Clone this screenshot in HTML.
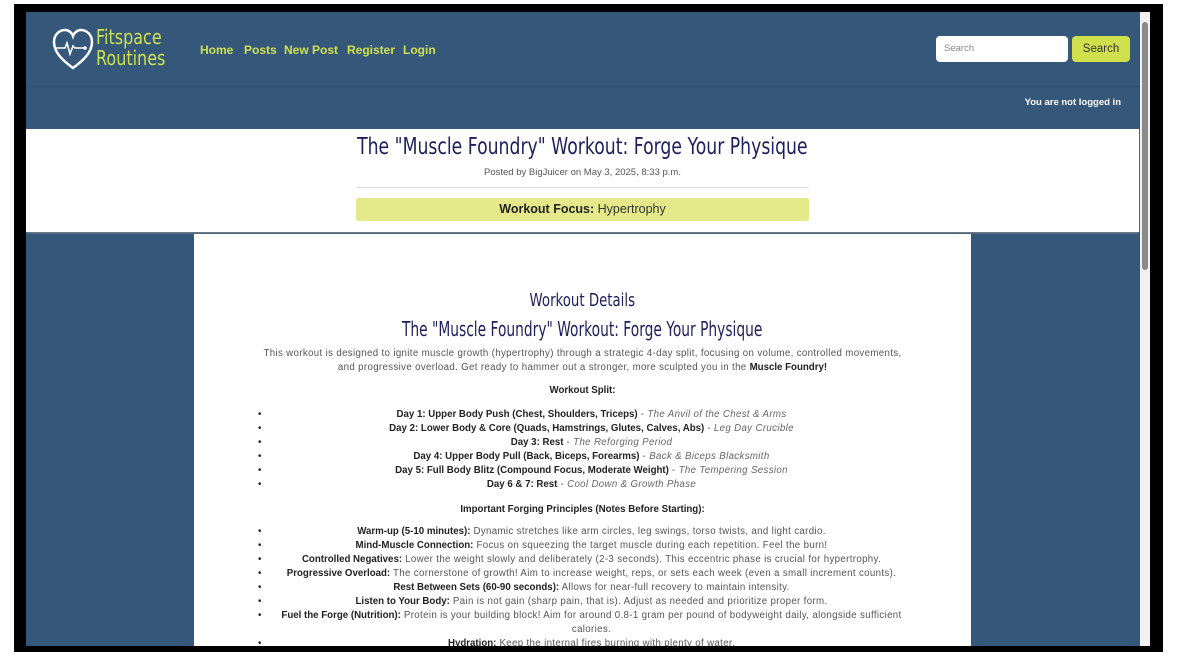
<!DOCTYPE html>
<html><head><style>
*{margin:0;padding:0;box-sizing:border-box}
html,body{width:1178px;height:667px;overflow:hidden;background:#fff;font-family:"Liberation Sans",sans-serif}
#frame{position:absolute;left:14px;top:4px;width:1149px;height:648px;background:#000}
#vp{position:absolute;left:26px;top:12px;width:1114px;height:634px;background:#35587a;overflow:hidden}
#sb{position:absolute;left:1140px;top:12px;width:10px;height:634px;background:#f0f0f0}
#sb div{position:absolute;left:2px;top:10px;width:6px;height:248px;background:#8a8a8a;border-radius:3px}
.hand{font-family:"DejaVu Sans",cursive;color:#1f1f5c;font-weight:normal;white-space:nowrap;display:inline-block}
nav a{position:absolute;top:31px;color:#cfe04d;font-size:12px;font-weight:bold;text-decoration:none}
#hdr{position:absolute;left:0;top:0;width:1114px;height:75px;border-bottom:1px solid #2f4f6e}
#card{position:absolute;left:0;top:117px;width:1113px;height:103px;background:#fff;box-shadow:0 1px 2px #888}
#main{position:absolute;left:168px;top:222px;width:777px;height:420px;background:#fff;text-align:center;color:#555;font-size:9.7px;letter-spacing:0.35px}
b{color:#222;letter-spacing:0}
ul{list-style:none}
li{line-height:14px}
li:before{content:"•";position:absolute;left:64px;color:#222}
i{color:#666}
</style></head><body>
<div id="frame"></div>
<div id="vp">
 <div id="hdr">
  <svg style="position:absolute;left:26px;top:16px" width="42" height="42" viewBox="0 0 42 42"><path d="M21 40 C10 32 2 24 2 14 C2 6 8 2 13 2 C17 2 20 5 21 8 C22 5 25 2 29 2 C34 2 40 6 40 14 C40 24 32 32 21 40Z" fill="none" stroke="#fff" stroke-width="2.5"/><path d="M3 20 H13 L15 15 L18 26 L21 18 L23 20 H33" fill="none" stroke="#fff" stroke-width="1.6"/><circle cx="33" cy="20" r="1.8" fill="#fff"/></svg>
  <div class="hand" style="position:absolute;left:70px;top:15px;color:#cfe04d;font-size:20px;line-height:21px;transform:scaleX(0.8);transform-origin:0 0">Fitspace<br>Routines</div>
  <nav><a style="left:174px">Home</a><a style="left:218px">Posts</a><a style="left:258px">New Post</a><a style="left:321px">Register</a><a style="left:377px">Login</a></nav>
  <div style="position:absolute;left:910px;top:24px;width:132px;height:26px;background:#fff;border-radius:4px;font-size:9.5px;color:#888;padding:7px 8px">Search</div>
  <div style="position:absolute;left:1046px;top:24px;width:58px;height:26px;background:#cfe04d;border-radius:4px;font-size:11.5px;color:#333;text-align:center;line-height:26px">Search</div>
 </div>
 <div style="position:absolute;right:19px;top:85px;color:#fff;font-size:9.5px;font-weight:bold">You are not logged in</div>
 <div id="card">
  <div style="position:absolute;left:0;width:1113px;top:5px;text-align:center"><span class="hand" style="font-size:23px;transform:scaleX(0.75)">The "Muscle Foundry" Workout: Forge Your Physique</span></div>
  <div style="position:absolute;left:330px;width:453px;top:38px;text-align:center;font-size:9.5px;color:#555">Posted by BigJuicer on May 3, 2025, 8:33 p.m.</div>
  <div style="position:absolute;left:330px;width:453px;top:58px;border-top:1px solid #ddd"></div>
  <div style="position:absolute;left:330px;width:453px;top:69px;height:23px;background:#e6e98a;border-radius:2px;text-align:center;font-size:12.5px;line-height:23px;color:#333"><b>Workout Focus:</b> Hypertrophy</div>
 </div>
 <div id="main">
  <div style="margin-top:55px;line-height:24px;letter-spacing:0"><span class="hand" style="font-size:18px;transform:scaleX(0.74)">Workout Details</span></div>
  <div style="line-height:26px;letter-spacing:0"><span class="hand" style="font-size:20px;transform:scaleX(0.69)">The "Muscle Foundry" Workout: Forge Your Physique</span></div>
  <p style="line-height:14px;padding:0 64px;margin-top:0">This workout is designed to ignite muscle growth (hypertrophy) through a strategic 4-day split, focusing on volume, controlled movements,<br>and progressive overload. Get ready to hammer out a stronger, more sculpted you in the <b>Muscle Foundry!</b></p>
  <p style="margin:10px 0 12px"><b>Workout Split:</b></p>
  <ul style="padding:0 60px 0 78px">
   <li><b>Day 1: Upper Body Push (Chest, Shoulders, Triceps)</b> - <i>The Anvil of the Chest &amp; Arms</i></li>
   <li><b>Day 2: Lower Body &amp; Core (Quads, Hamstrings, Glutes, Calves, Abs)</b> - <i>Leg Day Crucible</i></li>
   <li><b>Day 3: Rest</b> - <i>The Reforging Period</i></li>
   <li><b>Day 4: Upper Body Pull (Back, Biceps, Forearms)</b> - <i>Back &amp; Biceps Blacksmith</i></li>
   <li><b>Day 5: Full Body Blitz (Compound Focus, Moderate Weight)</b> - <i>The Tempering Session</i></li>
   <li><b>Day 6 &amp; 7: Rest</b> - <i>Cool Down &amp; Growth Phase</i></li>
  </ul>
  <p style="margin:12px 0 10px"><b>Important Forging Principles (Notes Before Starting):</b></p>
  <ul style="padding:0 60px 0 78px">
   <li><b>Warm-up (5-10 minutes):</b> Dynamic stretches like arm circles, leg swings, torso twists, and light cardio.</li>
   <li><b>Mind-Muscle Connection:</b> Focus on squeezing the target muscle during each repetition. Feel the burn!</li>
   <li><b>Controlled Negatives:</b> Lower the weight slowly and deliberately (2-3 seconds). This eccentric phase is crucial for hypertrophy.</li>
   <li><b>Progressive Overload:</b> The cornerstone of growth! Aim to increase weight, reps, or sets each week (even a small increment counts).</li>
   <li><b>Rest Between Sets (60-90 seconds):</b> Allows for near-full recovery to maintain intensity.</li>
   <li><b>Listen to Your Body:</b> Pain is not gain (sharp pain, that is). Adjust as needed and prioritize proper form.</li>
   <li><b>Fuel the Forge (Nutrition):</b> Protein is your building block! Aim for around 0.8-1 gram per pound of bodyweight daily, alongside sufficient calories.</li>
   <li><b>Hydration:</b> Keep the internal fires burning with plenty of water.</li>
  </ul>
 </div>
</div>
<div id="sb"><div></div></div>
</body></html>
